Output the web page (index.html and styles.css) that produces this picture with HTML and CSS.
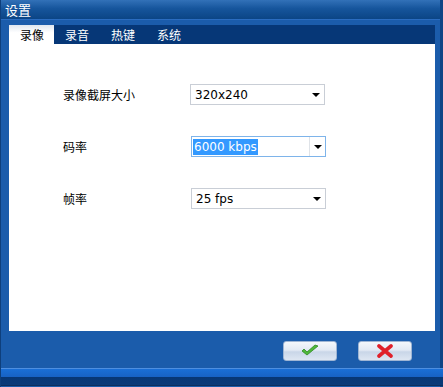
FILE: index.html
```html
<!DOCTYPE html>
<html lang="zh">
<head>
  <meta charset="UTF-8">
  <title>设置</title>
  <link rel="stylesheet" href="styles.css">
</head>
<body>
  <div class="window">
    <div class="title-bar">设置</div>
    <div class="frame">
      <div class="tabs">
        <div class="tab active">录像</div>
        <div class="tab">录音</div>
        <div class="tab">热键</div>
        <div class="tab">系统</div>
      </div>
      <div class="panel">
        <div class="row">
          <span class="label">录像截屏大小</span>
          <div class="select">
            <span class="value">320x240</span>
            <span class="arrow"></span>
          </div>
        </div>
        <div class="row">
          <span class="label">码率</span>
          <div class="select focused">
            <span class="value"><span class="selected">6000 kbps</span></span>
            <span class="arrow"></span>
          </div>
        </div>
        <div class="row">
          <span class="label">帧率</span>
          <div class="select">
            <span class="value">25 fps</span>
            <span class="arrow"></span>
          </div>
        </div>
      </div>
    </div>
    <div class="footer">
      <button class="btn">
        <svg width="20" height="14" viewBox="0 0 20 14">
          <path d="M2 7 L7 11 L18 2 L15 1 L7 8 L4 5 Z" fill="#4fb83a" stroke="#2f8a22" stroke-width="0.8" stroke-linejoin="round"/>
        </svg>
      </button>
      <button class="btn">
        <svg width="16" height="14" viewBox="0 0 16 14">
          <path d="M2 2 L14 12 M14 2 L2 12" stroke="#e0202a" stroke-width="3.6" stroke-linecap="round"/>
        </svg>
      </button>
    </div>
    <div class="status-band"></div>
  </div>
</body>
</html>
```

FILE: styles.css
```css
* {
  margin: 0;
  padding: 0;
  box-sizing: border-box;
}

body {
  background: #ffffff;
  font-family: "Noto Sans CJK SC", "DejaVu Sans", sans-serif;
}

.window {
  width: 443px;
  height: 387px;
  background: #1b5cab;
  border-left: 1px solid #0e3f7c;
  border-right: 3px solid #0f4485;
  display: flex;
  flex-direction: column;
}

.title-bar {
  height: 20px;
  background: linear-gradient(to bottom, #3271b8 0%, #16559c 45%, #0b4585 100%);
  border-bottom: 1px solid #2a6cc0;
  color: #ffffff;
  font-size: 13px;
  line-height: 19px;
  padding-left: 4px;
}

.frame {
  padding: 5px 5px 0 8px;
}

.tabs {
  height: 19px;
  background: #063777;
  display: flex;
  align-items: stretch;
}

.tab {
  width: 46px;
  color: #ffffff;
  font-size: 12px;
  line-height: 19px;
  padding-left: 11px;
  white-space: nowrap;
}

.tab.active {
  width: 45px;
  background: linear-gradient(to bottom, #dfe6ef 0%, #ffffff 40%);
  color: #000000;
}

.panel {
  height: 287px;
  background: #ffffff;
  padding-top: 40px;
  padding-left: 54px;
  display: flex;
  flex-direction: column;
  gap: 31px;
}

.row {
  display: flex;
  align-items: center;
  height: 21px;
}

.label {
  width: 128px;
  font-size: 12px;
  color: #000000;
}

.select {
  width: 135px;
  height: 21px;
  border: 1px solid #c9ced6;
  background: #ffffff;
  display: flex;
  align-items: center;
  font-family: "DejaVu Sans", sans-serif;
  font-size: 12px;
  color: #000000;
}

.row:first-child .select {
  margin-left: -1px;
}

.value {
  flex: 1;
  padding-left: 4px;
}

.selected {
  background: #3399ff;
  color: #ffffff;
  padding: 1px 1px;
}

.select.focused {
  border-color: #7eb4ea;
}

.select.focused .value {
  padding-left: 1px;
}

.arrow {
  width: 16px;
  height: 19px;
  position: relative;
}

.focused .arrow {
  border-left: 1px solid #dfe3e8;
}

.arrow::after {
  content: "";
  position: absolute;
  left: 4px;
  top: 8px;
  border-left: 4px solid transparent;
  border-right: 4px solid transparent;
  border-top: 4px solid #000000;
}

.footer {
  height: 37px;
  display: flex;
  justify-content: flex-end;
  align-items: center;
  gap: 21px;
  padding-right: 28px;
  padding-top: 2px;
}

.btn {
  width: 54px;
  height: 20px;
  border: 1px solid #9fb5d3;
  border-radius: 3px;
  background: linear-gradient(to bottom, #f4f7fb 0%, #e3eaf4 45%, #c9d6e8 55%, #dde6f2 100%);
  display: flex;
  align-items: center;
  justify-content: center;
}

.status-band {
  height: 18px;
  margin-right: -3px;
  border-top: 1px solid #4e8fe0;
  background: linear-gradient(to bottom, #1a6fd6 0%, #1762c4 50%, #073775 52%, #0a3a78 100%);
  border-bottom: 1px solid #0b2f5e;
}
```
